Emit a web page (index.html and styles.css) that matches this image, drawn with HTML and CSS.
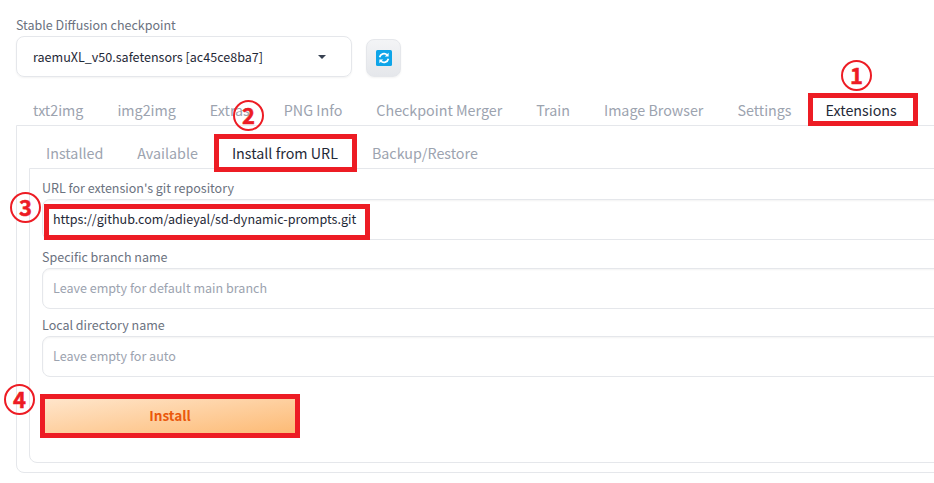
FILE: index.html
```html
<!DOCTYPE html>
<html lang="en">
<head>
<meta charset="utf-8">
<title>Extensions</title>
<link rel="stylesheet" href="styles.css">
</head>
<body>
<div class="page">
  <div class="checkpoint-row">
    <div class="checkpoint">
      <div class="label">Stable Diffusion checkpoint</div>
      <div class="select"><span>raemuXL_v50.safetensors [ac45ce8ba7]</span><i class="caret"></i></div>
    </div>
    <button class="refresh" aria-label="Refresh">
      <svg width="16" height="16" viewBox="0 0 16 16">
        <rect width="16" height="16" rx="1.5" fill="#0ea5e9"/>
        <path d="M3.6 7.2a4.5 4.5 0 0 1 7.6-2.2" fill="none" stroke="#fff" stroke-width="1.7"/>
        <path d="M12.6 2.8v3.8H8.8z" fill="#fff"/>
        <path d="M12.4 8.8a4.5 4.5 0 0 1-7.6 2.2" fill="none" stroke="#fff" stroke-width="1.7"/>
        <path d="M3.4 13.2V9.4h3.8z" fill="#fff"/>
      </svg>
    </button>
  </div>
  <div class="tabs">
    <span class="tab">txt2img</span>
    <span class="tab">img2img</span>
    <span class="tab">Extras</span>
    <span class="tab">PNG Info</span>
    <span class="tab">Checkpoint Merger</span>
    <span class="tab">Train</span>
    <span class="tab">Image Browser</span>
    <span class="tab">Settings</span>
    <span class="tab active">Extensions</span>
  </div>
  <div class="panel">
    <div class="subtabs">
      <span class="subtab">Installed</span>
      <span class="subtab">Available</span>
      <span class="subtab active">Install from URL</span>
      <span class="subtab">Backup/Restore</span>
    </div>
    <div class="subpanel">
      <div class="field">
        <div class="label">URL for extension's git repository</div>
        <div class="input filled">https://github.com/adieyal/sd-dynamic-prompts.git</div>
      </div>
      <div class="field">
        <div class="label">Specific branch name</div>
        <div class="input">Leave empty for default main branch</div>
      </div>
      <div class="field">
        <div class="label">Local directory name</div>
        <div class="input">Leave empty for auto</div>
      </div>
      <button class="install">Install</button>
    </div>
  </div>
</div>
<div class="mark box-1"></div>
<div class="mark box-2"></div>
<div class="mark box-3"></div>
<div class="mark box-4"></div>
<div class="num num-1">1</div>
<div class="num num-2">2</div>
<div class="num num-3">3</div>
<div class="num num-4">4</div>
</body>
</html>
```
FILE: styles.css
```css
html, body {
  margin: 0;
  width: 934px;
  height: 483px;
  overflow: hidden;
  background: #fff;
}
body {
  position: relative;
  font-family: "Noto Sans CJK JP", "Source Sans Pro", "Noto Sans", sans-serif;
  color: #1f2937;
}
.page {
  width: 1100px;
  padding: 15px 0 0 16px;
  box-sizing: border-box;
}
.checkpoint-row {
  display: flex;
  align-items: flex-end;
  gap: 14px;
}
.label {
  font-size: 12.5px;
  line-height: 20px;
  color: #6b7280;
}
.checkpoint .label {
  margin-bottom: 1px;
}
.select {
  width: 336px;
  height: 41px;
  box-sizing: border-box;
  border: 1px solid #e5e7eb;
  border-radius: 8px;
  box-shadow: 0 1px 2px rgba(0,0,0,.05);
  padding: 0 25px 0 16px;
  display: flex;
  align-items: center;
  justify-content: space-between;
  font-size: 12.55px;
  color: #1f2937;
}
.caret {
  width: 0;
  height: 0;
  border-left: 4px solid transparent;
  border-right: 4px solid transparent;
  border-top: 4px solid #374151;
}
.refresh {
  width: 35px;
  height: 38px;
  border: 1px solid #e5e7eb;
  border-radius: 8px;
  background: linear-gradient(to bottom, #f3f4f6, #e5e7eb);
  box-shadow: 0 1px 2px rgba(0,0,0,.05);
  padding: 0;
  display: flex;
  align-items: center;
  justify-content: center;
}
.tabs {
  display: flex;
  margin-top: 14px;
  height: 34px;
}
.tab {
  padding: 7px 17px 0;
  font-size: 14.3px;
  line-height: 24px;
  color: #9ca3af;
}
.tab.active, .subtab.active {
  color: #1f2937;
}
.panel {
  border: 1px solid #e5e7eb;
  border-radius: 0 0 8px 8px;
  padding: 0 12px 10px;
  height: 348px;
  box-sizing: border-box;
}
.subtabs {
  display: flex;
  height: 42px;
}
.subtab {
  padding: 15px 17px 0;
  font-size: 14.3px;
  line-height: 24px;
  color: #9ca3af;
}
.subpanel {
  border: 1px solid #e5e7eb;
  border-radius: 0 0 8px 8px;
  height: 295px;
  box-sizing: border-box;
  padding: 9px 12px 0;
}
.field {
  margin-bottom: 6.5px;
}
.field .label {
  line-height: 20px;
  margin-bottom: 1px;
}
.input {
  height: 41px;
  box-sizing: border-box;
  border: 1px solid #e5e7eb;
  border-radius: 8px;
  box-shadow: inset 0 1px 2px rgba(0,0,0,.05);
  padding: 0 10px 2px;
  display: flex;
  align-items: center;
  font-size: 12.55px;
  color: #9ca3af;
}
.input.filled {
  color: #1f2937;
}
.install {
  display: block;
  width: 250px;
  height: 36px;
  margin: 20.5px 0 0 3px;
  border: 0;
  padding: 0 0 2px;
  background: linear-gradient(to bottom right, #ffe6cc, #fdba74);
  color: #ea580c;
  font: 700 13.6px/34px "Noto Sans CJK JP", "Noto Sans", sans-serif;
}
.mark {
  position: absolute;
  box-sizing: border-box;
  border: 5px solid #ed1c24;
}
.box-1 { left: 808px; top: 93px; width: 110px; height: 33px; }
.box-2 { left: 214px; top: 134px; width: 143px; height: 38px; }
.box-3 { left: 44px; top: 204px; width: 326px; height: 36px; }
.box-4 { left: 40px; top: 394px; width: 260px; height: 44px; }
.num {
  position: absolute;
  box-sizing: border-box;
  width: 31px;
  height: 31px;
  border: 2.5px solid #ed1c24;
  border-radius: 50%;
  color: #ed1c24;
  font-size: 22px;
  font-weight: 700;
  -webkit-text-stroke: 0.5px #ed1c24;
  line-height: 25px;
  text-align: center;
}
.num-1 { left: 841px; top: 60px; }
.num-2 { left: 233px; top: 100px; }
.num-3 { left: 10px; top: 192px; }
.num-4 { left: 4px; top: 384px; }
```
